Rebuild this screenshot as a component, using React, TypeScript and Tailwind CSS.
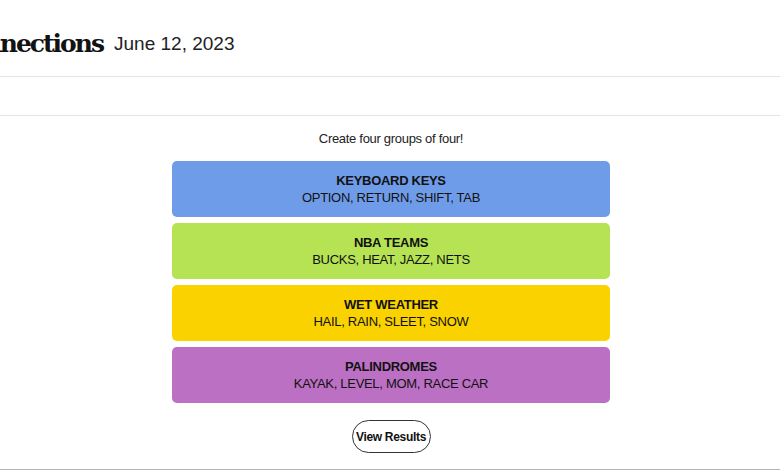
const groups = [
  { title: "KEYBOARD KEYS", words: "OPTION, RETURN, SHIFT, TAB", color: "bg-[#6f9ce9]" },
  { title: "NBA TEAMS", words: "BUCKS, HEAT, JAZZ, NETS", color: "bg-[#b6e354]" },
  { title: "WET WEATHER", words: "HAIL, RAIN, SLEET, SNOW", color: "bg-[#f9d200]" },
  { title: "PALINDROMES", words: "KAYAK, LEVEL, MOM, RACE CAR", color: "bg-[#bc70c4]" },
];

export default function App() {
  return (
    <div className="w-[780px] h-[470px] overflow-hidden bg-white flex flex-col font-['Liberation_Sans',Arial,sans-serif] text-[#121212]">
      <header className="h-[77px] shrink-0 flex items-center gap-[11px] border-b border-[#e4e4e4] overflow-hidden">
        <h1 className="-ml-[49px] pt-[10px] font-['DejaVu_Serif',serif] font-bold text-[25px] tracking-[-2px] leading-none">
          Connections
        </h1>
        <span className="pt-[10px] text-[19px] leading-none text-[#222]">June 12, 2023</span>
      </header>

      <div className="h-[39px] shrink-0 border-b border-[#e4e4e4]" />

      <main className="flex-1 flex flex-col items-center pt-[15px]">
        <p className="text-[13px] leading-[16px] tracking-[-0.3px] text-[#222] ml-[2px]">Create four groups of four!</p>

        <div className="mt-[14px] w-[438px] ml-[2px] flex flex-col gap-[6px]">
          {groups.map((g) => (
            <div
              key={g.title}
              className={`${g.color} h-[56px] rounded-[5px] flex flex-col items-center justify-center text-[13px] leading-[17px] tracking-[-0.3px] text-[#111]`}
            >
              <div className="font-bold">{g.title}</div>
              <div>{g.words}</div>
            </div>
          ))}
        </div>

        <button className="mt-[17px] ml-[2px] h-[33px] w-[79px] rounded-full border border-[#333] text-[12px] font-bold tracking-[-0.3px] text-[#111]">
          View Results
        </button>
      </main>

      <div className="h-px shrink-0 bg-[#b5b5b5]" />
    </div>
  );
}
